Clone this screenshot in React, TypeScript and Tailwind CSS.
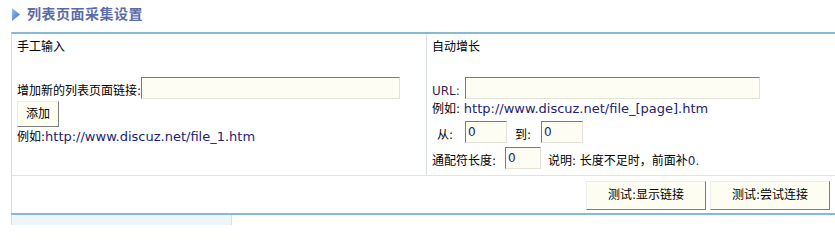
const inputCls =
  "h-[22px] bg-[#fdfdf3] border border-t-[#7a7a7a] border-l-[#7a7a7a] border-b-[#e2e2d6] border-r-[#e2e2d6] px-[2px] text-[12px] text-[#1b1b6b] outline-none";

const btnCls =
  "h-[29px] w-[120px] bg-[#fdfdf1] border border-t-[#ececec] border-l-[#ececec] border-b-[#7c7c7c] border-r-[#7c7c7c] text-[12px] text-black";

function Arrow() {
  return (
    <svg width="8" height="13" viewBox="0 0 8 13" className="shrink-0">
      <defs>
        <linearGradient id="ag" x1="0" y1="0" x2="1" y2="1">
          <stop offset="0" stopColor="#9fc4f0" />
          <stop offset="1" stopColor="#2f6ccc" />
        </linearGradient>
      </defs>
      <path d="M0 0 L8 6.5 L0 13 Z" fill="url(#ag)" />
    </svg>
  );
}

export default function App() {
  return (
    <div
      className="w-[835px] h-[226px] overflow-hidden bg-white text-[12px] text-black"
      style={{ fontFamily: '"DejaVu Sans", "Noto Sans CJK SC", sans-serif' }}
    >
      {/* title */}
      <div className="h-[32px] flex items-center gap-[7px] pl-[12px] pb-[4px]">
        <Arrow />
        <h2 className="text-[14px] font-bold text-[#5b6ba5] leading-none tracking-[0.5px]">列表页面采集设置</h2>
      </div>

      <div className="ml-[11px] border-t-2 border-[#86b9d6] border-l border-l-[#d3dae4]">
        <div className="flex h-[142px] border-b border-[#dde3eb]">
          {/* manual input */}
          <div className="w-[415px] border-r border-[#d9dfe8] pl-[5px] pt-[6px]">
            <div className="leading-[14px]">手工输入</div>
            <div className="mt-[23px] flex items-end h-[22px]">
              <span className="leading-[14px] mb-[1px]">增加新的列表页面链接:</span>
              <input className={`${inputCls} w-[259px]`} />
            </div>
            <button className="mt-[2px] h-[26px] w-[42px] bg-[#fdfdf1] border border-t-[#ececec] border-l-[#ececec] border-b-[#7c7c7c] border-r-[#7c7c7c] text-[12px]">
              添加
            </button>
            <div className="mt-[3px] leading-[14px]">
              例如:<span className="text-[13px] text-[#1d2270]">http://www.discuz.net/file_1.htm</span>
            </div>
          </div>

          {/* auto increase */}
          <div className="flex-1 pl-[5px] pt-[6px]">
            <div className="leading-[14px]">自动增长</div>
            <div className="mt-[23px] flex items-end h-[22px]">
              <span className="w-[33px] leading-[14px] mb-[1px] text-[#3a1f4f]">URL:</span>
              <input className={`${inputCls} w-[295px]`} />
            </div>
            <div className="mt-[3px] leading-[14px]">
              例如: <span className="text-[13px] text-[#1d2270]">http://www.discuz.net/file_[page].htm</span>
            </div>
            <div className="mt-[5px] flex items-end h-[22px]">
              <span className="w-[33px] pl-[5px] leading-[14px] mb-[1px]">从:</span>
              <input className={`${inputCls} w-[42px]`} defaultValue="0" />
              <span className="w-[34px] pl-[8px] leading-[14px] mb-[1px]">到:</span>
              <input className={`${inputCls} w-[42px]`} defaultValue="0" />
            </div>
            <div className="mt-[4px] flex items-end h-[22px]">
              <span className="w-[73px] leading-[14px] mb-[1px]">通配符长度:</span>
              <input className={`${inputCls} w-[36px]`} defaultValue="0" />
              <span className="pl-[7px] leading-[14px] mb-[1px]">
                说明: 长度不足时，前面补<span className="text-[#1d2270]">0.</span>
              </span>
            </div>
          </div>
        </div>

        {/* action row */}
        <div className="h-[37px] flex items-center justify-end gap-[4px] pr-[5px] pt-[1px]">
          <button className={btnCls}>测试:显示链接</button>
          <button className={btnCls}>测试:尝试连接</button>
        </div>
      </div>

      <div className="ml-[11px] border-t-2 border-[#86b9d6]">
        <div className="w-[221px] h-[10px] bg-[#eef5fd] border-r border-[#d9dfe8] border-l border-l-[#d3dae4]" />
      </div>
    </div>
  );
}
